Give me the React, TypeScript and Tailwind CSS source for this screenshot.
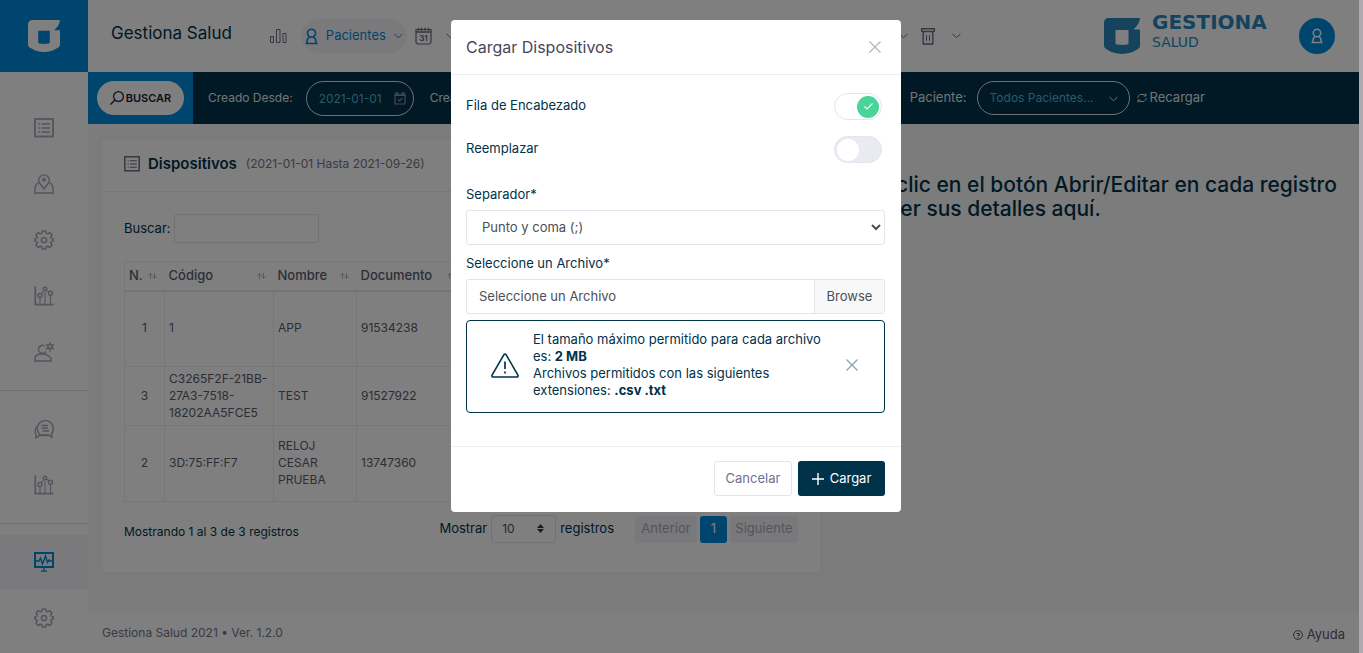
import React, { useState } from 'react'
import clsx from 'clsx'

interface IconProps {
  className?: string
}

interface Device {
  n: number
  code: string
  name: string
  document: string
  rowClass: string
}

const devices: Device[] = [
  { n: 1, code: '1', name: 'APP', document: '91534238', rowClass: 'h-[76px]' },
  {
    n: 3,
    code: 'C3265F2F-21BB-27A3-7518-18202AA5FCE5',
    name: 'TEST',
    document: '91527922',
    rowClass: 'h-[59px]',
  },
  {
    n: 2,
    code: '3D:75:FF:F7',
    name: 'RELOJ CESAR PRUEBA',
    document: '13747360',
    rowClass: 'h-[76px]',
  },
]

/* ---------- icons ---------- */

const Svg = ({
  className,
  box = '0 0 20 20',
  width = 1.3,
  children,
}: {
  className?: string
  box?: string
  width?: number
  children: React.ReactNode
}) => (
  <svg
    className={className}
    viewBox={box}
    fill="none"
    stroke="currentColor"
    strokeWidth={width}
    aria-hidden="true">
    {children}
  </svg>
)

const ListIcon = ({ className }: IconProps) => (
  <Svg className={className} width={1.8}>
    <rect x="1" y="1" width="18" height="17.5" />
    <path d="M4.5 6h1.5M4.5 10h1.5M4.5 14h1.5M7.5 6H16M7.5 10H16M7.5 14H16" strokeWidth="1.4" />
  </Svg>
)

const MapIcon = ({ className }: IconProps) => (
  <Svg className={className} width={1.5}>
    <path d="M10 15 5.8 9.2a5.2 5.2 0 1 1 8.4 0z" />
    <circle cx="10" cy="5.8" r="1.2" />
    <path d="M4.8 9.5H3L.8 14v5h18.4v-5L17 9.5h-1.8" />
  </Svg>
)

const GearIcon = ({ className }: IconProps) => (
  <Svg className={className} width={1.5}>
    <path
      strokeLinejoin="round"
      d="M8.3 1h3.4l.5 2.3 1.5.6 2-1.3 2.4 2.4-1.3 2 .6 1.5 1.9.4v2.2l-1.9.5-.6 1.5 1.3 2-2.4 2.4-2-1.3-1.5.6-.5 2.2H8.3l-.5-2.2-1.5-.6-2 1.3-2.4-2.4 1.3-2-.6-1.5L.8 11V8.9l1.8-.4.6-1.5-1.3-2 2.4-2.4 2 1.3 1.5-.6z"
    />
    <circle cx="10" cy="10" r="2.6" />
  </Svg>
)

const StatsIcon = ({ className }: IconProps) => (
  <Svg className={className} width={1.5}>
    <path d="M1.3.5v18.2h18.2" strokeWidth="1.7" />
    <circle cx="6" cy="9.5" r="2" />
    <circle cx="11" cy="3" r="1.7" />
    <circle cx="16.5" cy="7.2" r="2" />
    <path d="M7 7.8 10 4.5M12.4 4l2.6 2M6 12v6.5M11 6v12.5M16.5 10v8.5" strokeWidth="1.1" />
  </Svg>
)

const UserGearIcon = ({ className }: IconProps) => (
  <Svg className={className} width={1.5}>
    <path d="M10.5 3.8A4 4 0 1 0 12 9.3M1 19v-2.4c0-2.6 2.6-4.6 7-4.6s7.5 1.8 9 4.4V19z" />
    <circle cx="16" cy="4.6" r="2.1" />
    <path d="M16 0v2.4M16 7v2.4M12 2.3l2 1.2M18 5.8l2 1.2M12 7l2-1.2M18 3.5l2-1.2" />
  </Svg>
)

const ChatIcon = ({ className }: IconProps) => (
  <Svg className={className} width={1.5}>
    <path d="M17.8 18.5v-4.3A8 8 0 1 0 6 15.6l1 .5h8.3z" strokeLinejoin="round" />
    <path d="M3.5 7.5C.8 9.5.5 13 2 15v3.8l3.2-2.2h9.5M7.5 6.5h6.5M7.5 9.3h6.5M8.5 12h6.5" />
  </Svg>
)

const MonitorIcon = ({ className }: IconProps) => (
  <Svg className={className} width={2}>
    <path d="M1 1h18v14H1z" />
    <path d="M10 15v4M7 19.2h6" strokeWidth="1.3" />
    <path d="M2 9h3l1.5-3 2 6 3-8 2 6.5L15 8l.8 1H18" strokeWidth="1.4" />
  </Svg>
)

const BarsIcon = ({ className }: IconProps) => (
  <Svg className={className} box="0 0 17 16" width={1}>
    <path d="M.5 8.5h3v6h-3zM6.5 1.5h3.500v13H6.500zM13 5.500h3v9h-3z" />
  </Svg>
)

const UserIcon = ({ className }: IconProps) => (
  <Svg className={className} box="0 0 14 18" width={1.8}>
    <circle cx="7" cy="5.5" r="4.3" />
    <path d="M4.8 9.5 2.6 12 2 16.5h10L11.4 12 9.2 9.5M.5 16.5h13" />
  </Svg>
)

const CalendarIcon = ({ className }: IconProps) => (
  <svg className={className} viewBox="0 0 17 18" aria-hidden="true">
    <path
      d="M1 2.5h15v12.5l-1.5 2H2.5L1 15.5z"
      fill="none"
      stroke="currentColor"
      strokeWidth="1.2"
    />
    <path
      d="M1 5h15M3.5.8v3M6.5.8v3M10 .8v3M13.5.8v3"
      stroke="currentColor"
      strokeWidth="1.4"
    />
    <text
      x="8.5"
      y="13.5"
      textAnchor="middle"
      fill="currentColor"
      fontSize="8"
      fontWeight="700"
      fontFamily="Inter, sans-serif">
      31
    </text>
  </svg>
)

const CalendarCheckIcon = ({ className }: IconProps) => (
  <Svg className={className} box="0 0 12 13" width={1.2}>
    <path d="M1 2h10v10H1zM1 3.5h10" />
    <path d="M3 0v3M9 0v3" strokeWidth="1.6" />
    <path d="m4 7.5 1.5 1.5L8.5 6" />
  </Svg>
)

const TrashIcon = ({ className }: IconProps) => (
  <Svg className={className} box="0 0 14 17" width={1.4}>
    <path d="M.7.8h12.6v2.6H.7zM2.2 3.5h9.6V16H2.2z" />
    <path d="M5.5 7v6M8.5 7v6" strokeWidth="1" />
  </Svg>
)

const ChevronIcon = ({ className }: IconProps) => (
  <Svg className={className} box="0 0 9 6" width={1}>
    <path d="M.5.8 4.5 4.8 8.5.8" />
  </Svg>
)

const SearchIcon = ({ className }: IconProps) => (
  <Svg className={className} box="0 0 14 14" width={1.2}>
    <circle cx="8.5" cy="5.5" r="4.9" />
    <path d="M5 9 .5 13.5" />
  </Svg>
)

const RefreshIcon = ({ className }: IconProps) => (
  <Svg className={className} box="0 0 10 10" width={1}>
    <path d="M1 5V3.5L3 1.5h4.5L9 3M9 .5V3H6.5M9 5v1.5L7 8.5H2.5L1 7M1 9.5V7h2.5" />
  </Svg>
)

const CloseIcon = ({ className }: IconProps) => (
  <Svg className={className} box="0 0 12 12" width={1.4}>
    <path d="m.5.5 11 11M11.5.5l-11 11" />
  </Svg>
)

const WarningIcon = ({ className }: IconProps) => (
  <Svg className={className} box="0 0 28 25" width={1.6}>
    <path d="M14 1c.6 0 .9.4 1.2.9l11.6 20c.5 1 .2 2.1-1 2.1H2.2c-1.2 0-1.5-1.1-1-2.1l11.6-20c.3-.5.6-.9 1.2-.9z" />
    <path d="M14 8.5v7.5M14 18.5v2" strokeWidth="1.7" />
  </Svg>
)

const SortIcon = ({ className }: IconProps) => (
  <Svg className={className} box="0 0 9 6" width={0.9}>
    <path d="M2.5 6V.8M.5 2.5l2-1.7 2 1.7M6.5 0v5.2M4.7 3.5l1.8 1.7 2-1.7" />
  </Svg>
)

const HelpIcon = ({ className }: IconProps) => (
  <Svg className={className} box="0 0 10 10" width={1}>
    <circle cx="5" cy="5" r="4.4" />
    <path d="M3.5 3.5h2.8v1.7H5v1M5 7v1" />
  </Svg>
)

const LogoMark = ({ className }: IconProps) => (
  <svg className={className} viewBox="0 0 36 36" aria-hidden="true">
    <path
      fill="currentColor"
      fillRule="evenodd"
      d="M5 0h31c-.5 4.5-2.5 8-6.5 11.5H36V27c0 2.5-1 3.6-3 4.6C28.5 34.5 24 36 18 36S7.5 34.5 3 31.6C1 30.6 0 29.5 0 27V5c0-3 2-5 5-5zm6.500 12v13c0 1 .5 1.500 1.500 1.500 3.500.6 7 .6 10 0 1 0 1.500-.5 1.500-1.500V12z"
    />
  </svg>
)

/* ---------- layout ---------- */

const menu = [
  [
    { label: 'Registros', icon: ListIcon },
    { label: 'Mapa', icon: MapIcon },
    { label: 'Procesos', icon: GearIcon },
    { label: 'Reportes', icon: StatsIcon },
    { label: 'Usuarios', icon: UserGearIcon },
  ],
  [
    { label: 'Mensajes', icon: ChatIcon },
    { label: 'Indicadores', icon: StatsIcon },
  ],
  [
    { label: 'Dispositivos', icon: MonitorIcon, active: true },
    { label: 'Configuración', icon: GearIcon },
  ],
]

const Sidebar = () => (
  <aside className="w-[88px] shrink-0 bg-white">
    <a
      href="#"
      aria-label="Inicio"
      className="flex h-[72px] items-center justify-center bg-[#008ada] text-white">
      <LogoMark className="size-8" />
    </a>
    <nav className="pt-7">
      {menu.map((group, index) => (
        <div
          key={index}
          className={clsx(index > 0 && 'mt-[10px] border-t border-[#dddfe8] pt-[10px]')}>
          {group.map(({ label, icon: Icon, ...rest }) => {
            const active = 'active' in rest
            return (
              <a
                key={label}
                href="#"
                aria-label={label}
                className={clsx(
                  'flex h-14 items-center justify-center bg-clip-content py-px',
                  active ? 'bg-[#f4f4fa] text-[#008ada]' : 'text-[#a8aabb]',
                )}>
                <Icon className="size-5" />
              </a>
            )
          })}
        </div>
      ))}
    </nav>
  </aside>
)

const Header = () => (
  <header className="flex h-[72px] items-center bg-white pr-6 pl-[23px] text-[#6c6a85]">
    <h1 className="mb-1 text-[17px] text-[#003249]">Gestiona Salud</h1>
    <nav className="ml-[38px] flex items-center">
      <a href="#" aria-label="Tablero">
        <BarsIcon className="h-4 w-[17px]" />
      </a>
      <button
        type="button"
        className="ml-[14px] flex h-[34px] items-center rounded-full bg-[#f4f5fb] pr-1 pl-1 text-[#008ada]">
        <UserIcon className="h-[17px] w-[13px]" />
        <span className="ml-2 text-[13px]">Pacientes</span>
        <ChevronIcon className="ml-2 h-[6px] w-[9px]" />
      </button>
      <button type="button" aria-label="Agenda" className="ml-2 flex items-center gap-[14px]">
        <CalendarIcon className="h-[18px] w-[17px]" />
        <ChevronIcon className="h-[6px] w-[9px]" />
      </button>
    </nav>
    <div className="mr-[143px] ml-auto flex items-center">
      <ChevronIcon className="h-[6px] w-[9px]" />
      <button type="button" aria-label="Papelera" className="ml-[13px] flex items-center gap-[17px]">
        <TrashIcon className="h-[17px] w-[14px]" />
        <ChevronIcon className="h-[6px] w-[9px]" />
      </button>
    </div>
    <div className="flex w-[177px] items-center gap-3 text-[#2a86bd]">
      <LogoMark className="size-9 shrink-0" />
      <div className="mb-3 font-['DejaVu_Sans',sans-serif]">
        <div className="text-[20px] leading-6 font-bold">GESTIONA</div>
        <div className="text-[14px] leading-4">SALUD</div>
      </div>
    </div>
    <button
      type="button"
      aria-label="Perfil"
      className="ml-[18px] flex size-9 items-center justify-center rounded-full bg-[#008ada] text-white">
      <UserIcon className="h-4 w-3" />
    </button>
  </header>
)

const DateField = ({ id, label, value }: { id: string; label: string; value: string }) => (
  <div className="flex items-center gap-[13px] text-[12px]">
    <label htmlFor={id}>{label}</label>
    <div className="relative">
      <input
        id={id}
        type="text"
        defaultValue={value}
        className="h-[35px] w-[108px] rounded-full border border-[#e2e5ec] bg-transparent pl-3 text-[#50b4d6]"
      />
      <CalendarCheckIcon className="absolute top-[11px] right-2 h-[13px] w-3 text-[#8e8ca3]" />
    </div>
  </div>
)

const FilterBar = () => (
  <div className="flex h-[52px] items-center bg-[#003249] text-[13px] text-[#e4e6ef]">
    <div className="flex h-full w-[105px] items-center justify-center bg-[#008ada]">
      <button
        type="button"
        className="flex h-[34px] w-[87px] items-center justify-center gap-[2px] rounded-full bg-white text-[11px] font-semibold text-[#1c1a30]">
        <SearchIcon className="size-[14px]" />
        BUSCAR
      </button>
    </div>
    <div className="ml-[15px] flex items-center gap-4">
      <DateField id="from" label="Creado Desde:" value="2021-01-01" />
      <DateField id="to" label="Creado Hasta:" value="2021-09-26" />
    </div>
    <div className="mr-[154px] ml-auto flex items-center">
      <label htmlFor="patient">Paciente:</label>
      <div className="relative ml-[10px]">
        <select
          id="patient"
          className="h-[34px] w-[153px] appearance-none rounded-full border border-[#e2e5ec] bg-transparent pl-3 text-[12px] text-[#50b4d6]">
          <option>Todos Pacientes...</option>
        </select>
        <ChevronIcon className="pointer-events-none absolute top-[15px] right-3 h-[6px] w-[9px]" />
      </div>
      <button type="button" className="ml-[7px] flex items-center gap-[3px]">
        <RefreshIcon className="size-[10px]" />
        Recargar
      </button>
    </div>
  </div>
)

const columns = [
  { label: 'N.', width: 'w-10' },
  { label: 'Código', width: 'w-[109px]' },
  { label: 'Nombre', width: 'w-[83px]' },
  { label: 'Documento', width: 'w-[107px]' },
]

const DeviceTable = () => (
  <table className="mt-[18px] w-full table-fixed border-collapse border border-[#ebedf2] text-[13px] leading-[17px] text-[#595d6e]">
    <thead>
      <tr className="h-[29px] border-b-2 border-[#ebedf2]">
        {columns.map(({ label, width }) => (
          <th key={label} className={clsx('pr-2 pl-1 text-left font-medium', width)}>
            <span className="flex items-center justify-between">
              {label}
              <SortIcon className="h-[6px] w-[9px] shrink-0 text-[#a8aabb]" />
            </span>
          </th>
        ))}
        <th />
      </tr>
    </thead>
    <tbody>
      {devices.map(device => (
        <tr key={device.n} className={device.rowClass}>
          <td className="border border-[#ebedf2] pb-[2px] text-center text-[12px]">{device.n}</td>
          <td className="border border-[#ebedf2] pb-[2px] pl-1 text-[12px] break-words">
            {device.code}
          </td>
          <td className="border border-[#ebedf2] pr-3 pb-[2px] pl-1 text-[12px]">{device.name}</td>
          <td className="border border-[#ebedf2] pb-[2px] pl-1 text-[12px]">{device.document}</td>
          <td className="border border-[#ebedf2]" />
        </tr>
      ))}
    </tbody>
  </table>
)

const DeviceCard = () => (
  <section className="rounded bg-white shadow-[0_0_13px_0_rgba(82,63,105,0.05)]">
    <div className="flex h-[53px] items-center border-b border-[#ebedf2] pb-[2px] pl-[22px]">
      <ListIcon className="size-4 text-[#6c6a85]" />
      <h2 className="ml-2 text-[15px] font-semibold text-[#003249]">Dispositivos</h2>
      <span className="ml-[9px] text-[12px] text-[#74748a]">(2021-01-01 Hasta 2021-09-26)</span>
    </div>
    <div className="px-[22px] pt-[22px] pb-[29px] text-[13px] text-[#003249]">
      <div className="flex items-center gap-[3px]">
        <label htmlFor="search">Buscar:</label>
        <input
          id="search"
          type="search"
          className="h-[29px] w-[145px] rounded-[3px] border border-[#e2e5ec] px-2"
        />
      </div>
      <DeviceTable />
      <div className="mt-[13px] flex items-center justify-between">
        <p className="pt-[6px] text-[12px]">Mostrando 1 al 3 de 3 registros</p>
        <div className="flex items-center">
          <label htmlFor="size">Mostrar</label>
          <div className="relative mx-1">
            <select
              id="size"
              className="h-7 w-[65px] appearance-none rounded-[3px] border border-[#e2e5ec] bg-white pl-[10px] text-[12px] text-[#495057]">
              <option>10</option>
            </select>
            <svg
              className="pointer-events-none absolute top-[9px] right-3 h-[9px] w-[7px]"
              viewBox="0 0 7 9"
              fill="#343a40"
              aria-hidden="true">
              <path d="M3.5 0 7 4H0zM3.5 9 0 5h7z" />
            </svg>
          </div>
          <span>registros</span>
          <div className="ml-[21px] flex gap-[3px] text-[#a7a9ba]">
            <button type="button" className="h-[27px] w-[62px] rounded-[3px] bg-[#f2f3f9]">
              Anterior
            </button>
            <button type="button" className="h-[27px] w-[27px] rounded-[3px] bg-[#008ada] text-white">
              1
            </button>
            <button type="button" className="h-[27px] w-[68px] rounded-[3px] bg-[#f2f3f9]">
              Siguiente
            </button>
          </div>
        </div>
      </div>
    </div>
  </section>
)

/* ---------- upload dialog ---------- */

const Toggle = ({ id, label, initial }: { id: string; label: string; initial: boolean }) => {
  const [checked, setChecked] = useState(initial)

  return (
    <div className="mb-[13px] flex h-[30px] items-end justify-between pr-[3px]">
      <label htmlFor={id} className="self-center">
        {label}
      </label>
      <div
        className={clsx(
          'relative flex h-[27px] w-12 items-center rounded-full border border-[#e2e5ec] px-[2px]',
          checked ? 'justify-end bg-white' : 'bg-[#e8ebf1]',
        )}>
        <input
          id={id}
          type="checkbox"
          checked={checked}
          onChange={() => setChecked(!checked)}
          className="absolute inset-0 z-10 cursor-pointer opacity-0"
        />
        <span
          className={clsx(
            'flex size-[22px] items-center justify-center rounded-full text-white',
            checked ? 'bg-[#48d597]' : 'bg-white',
          )}>
          {checked && (
            <Svg className="h-[7px] w-[9px]" box="0 0 9 7" width={1.1}>
              <path d="M.5 3.5 3 6 8.5.5" />
            </Svg>
          )}
        </span>
      </div>
    </div>
  )
}

const UploadDialog = () => (
  <div className="fixed inset-0 flex items-start justify-center bg-black/50 pt-5 pr-[11px]">
    <div
      role="dialog"
      aria-labelledby="dialog-title"
      className="w-[450px] rounded bg-white text-[13px] leading-[17px] text-[#003249]">
      <div className="flex h-[55px] items-center justify-between border-b border-[#ebedf2] pr-5 pl-[15px]">
        <h2 id="dialog-title" className="text-[16px] text-[#48465b]">
          Cargar Dispositivos
        </h2>
        <button type="button" aria-label="Cerrar" className="text-[#b4b6c6]">
          <CloseIcon className="size-3" />
        </button>
      </div>
      <div className="pt-[15px] pr-4 pb-[33px] pl-[15px]">
        <Toggle id="header-row" label="Fila de Encabezado" initial={true} />
        <Toggle id="replace" label="Reemplazar" initial={false} />
        <label htmlFor="separator" className="mt-[23px] block">
          Separador*
        </label>
        <select
          id="separator"
          className="mt-[7px] h-[35px] w-full rounded-[3px] border border-[#e2e5ec] bg-white pb-[2px] pl-[11px] text-[#495057]">
          <option>Punto y coma (;)</option>
        </select>
        <label htmlFor="file" className="mt-[10px] block">
          Seleccione un Archivo*
        </label>
        <input id="file" type="file" accept=".csv,.txt" className="sr-only" />
        <label
          htmlFor="file"
          className="mt-[7px] flex h-[35px] items-stretch overflow-hidden rounded-[3px] border border-[#e2e5ec] text-[#495057]">
          <span className="flex flex-1 items-center pl-3">Seleccione un Archivo</span>
          <span className="flex w-[70px] items-center justify-center border-l border-[#e2e5ec] bg-[#f7f8fa]">
            Browse
          </span>
        </label>
        <div
          role="alert"
          className="mt-[6px] flex items-center rounded border border-[#003249] pt-[10px] pr-[26px] pb-[13px] pl-6">
          <WarningIcon className="h-[25px] w-7 shrink-0" />
          <p className="ml-[14px] flex-1">
            El tamaño máximo permitido para cada archivo
            <br />
            es: <b>2 MB</b>
            <br />
            Archivos permitidos con las siguientes
            <br />
            extensiones: <b>.csv .txt</b>
          </p>
          <button type="button" aria-label="Descartar" className="text-[#8fa5b0]">
            <CloseIcon className="size-3" />
          </button>
        </div>
      </div>
      <div className="flex justify-end gap-[6px] border-t border-[#ebedf2] pt-[14px] pr-4 pb-4">
        <button
          type="button"
          className="h-[35px] w-[78px] rounded-[3px] border border-[#e2e5ec] text-[#6c7293]">
          Cancelar
        </button>
        <button
          type="button"
          className="flex h-[35px] w-[87px] items-center justify-center gap-[6px] rounded-[3px] bg-[#003249] text-white">
          <Svg className="size-3" box="0 0 12 12" width={1.4}>
            <path d="M6 0v12M0 6h12" />
          </Svg>
          Cargar
        </button>
      </div>
    </div>
  </div>
)

const App = () => (
  <div className="flex min-h-screen bg-[#f9f9fa] pr-1 font-['Inter',sans-serif] text-[13px]">
    <Sidebar />
    <div className="flex min-w-0 flex-1 flex-col">
      <Header />
      <FilterBar />
      <main className="grid flex-1 grid-cols-[718fr_507fr] items-start gap-[18px] px-[14px] pt-[15px]">
        <DeviceCard />
        <p className="mt-[34px] text-[21px] leading-6 font-medium whitespace-nowrap text-[#003249]">
          Haga clic en el botón Abrir/Editar en cada registro
          <br />
          para ver sus detalles aquí.
        </p>
      </main>
      <footer className="flex h-[41px] items-center justify-between bg-white px-[14px] text-[#74748a]">
        <span className="text-[12px]">Gestiona Salud 2021 • Ver. 1.2.0</span>
        <a href="#" className="flex items-center gap-1 pt-1 text-[#595d6e]">
          <HelpIcon className="size-[10px]" />
          Ayuda
        </a>
      </footer>
    </div>
    <UploadDialog />
    {/* scroll track */}
    <div className="fixed inset-y-0 right-0 w-1 bg-[#aeabae]" />
  </div>
)

export default App
